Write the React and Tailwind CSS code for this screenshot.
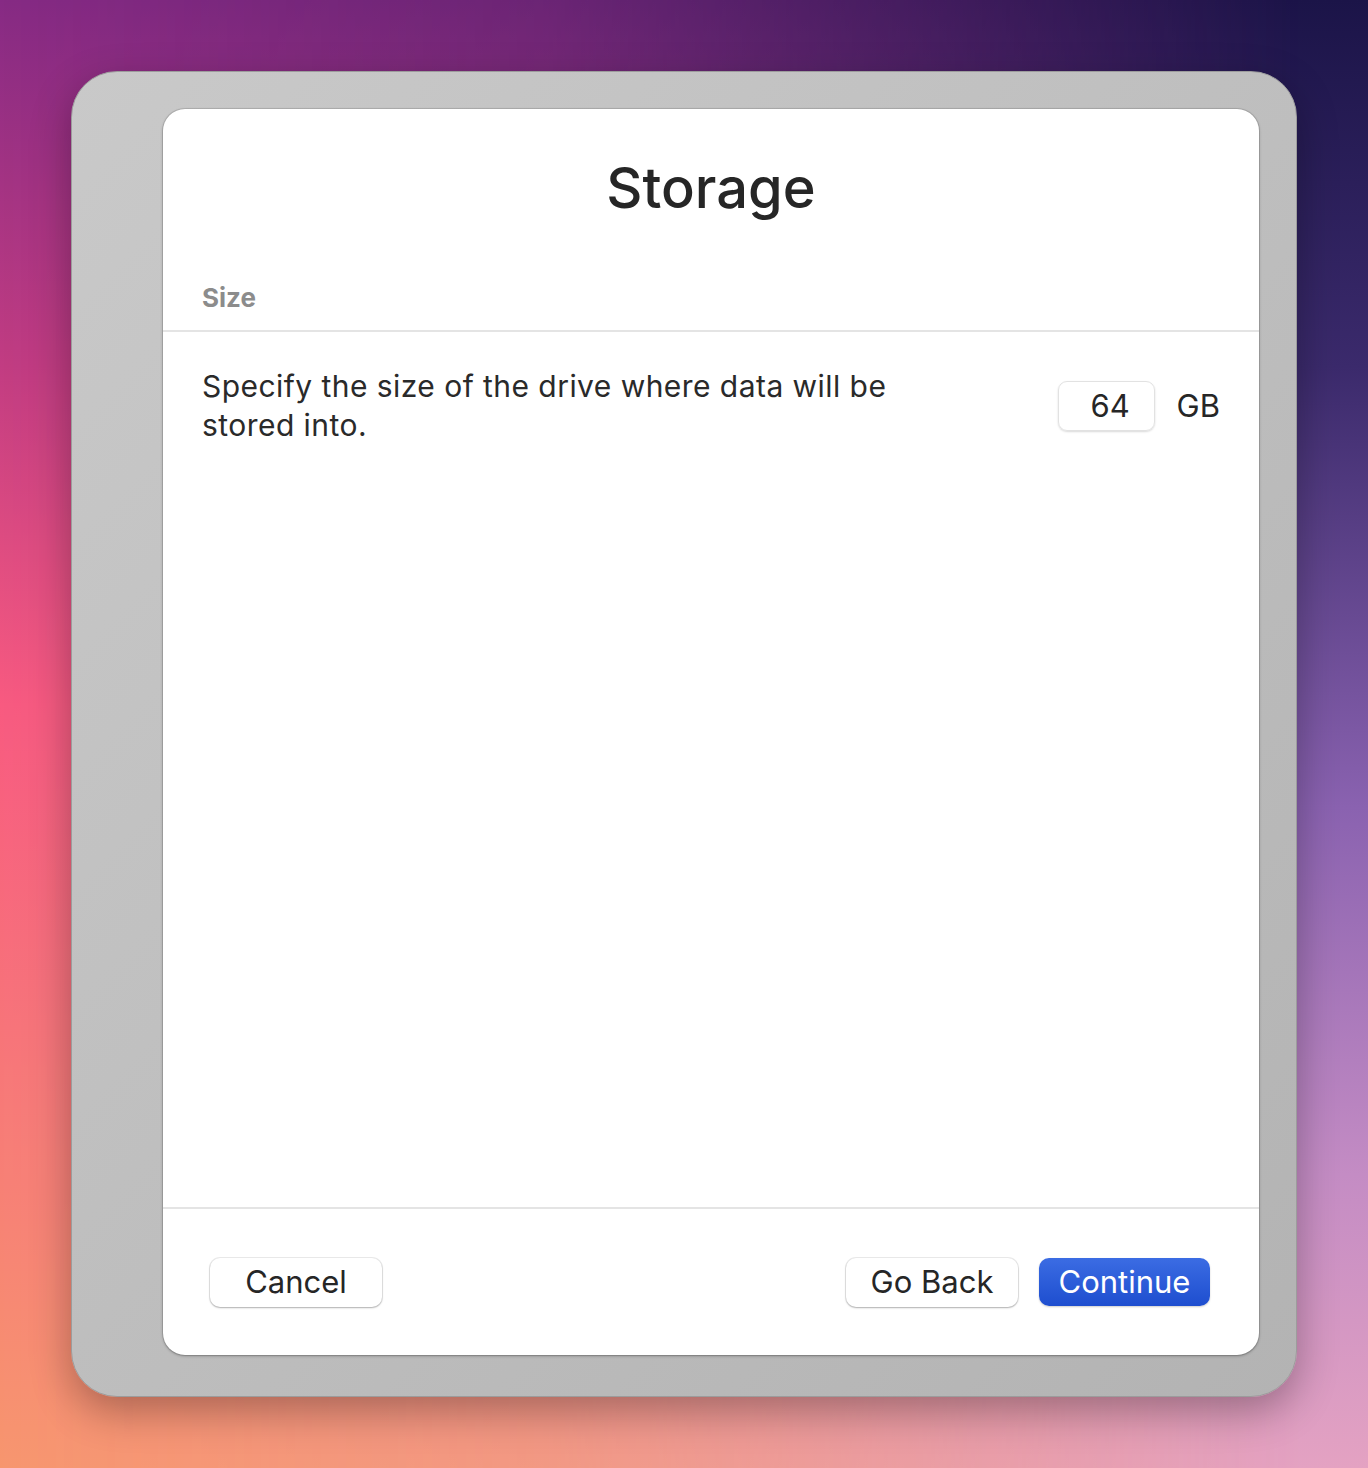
export default function App() {
  return (
    <div className="relative w-full h-[1468px] overflow-hidden bg-[linear-gradient(to_bottom,#1b1448_0%,#3b2a6c_25%,#8a62b0_55%,#c48cc4_80%,#e4a2c2_100%)] before:absolute before:inset-0 before:content-[''] before:bg-[linear-gradient(to_bottom,#862a84_0%,#c23c82_25%,#f85a80_48%,#f77479_70%,#f7966e_100%)] before:[mask-image:linear-gradient(to_right,black_0%,rgba(0,0,0,0.75)_40%,transparent_95%)] font-['Inter','Liberation_Sans',Arial,sans-serif]">
      <div className="relative pt-[71px] pl-[71px]">
        <div className="w-[1226px] h-[1326px] rounded-[46px] bg-[linear-gradient(135deg,#c9c9c9,#b3b3b3)] border border-[#9c9c9c] shadow-[0_14px_40px_rgba(0,0,0,0.3)] pl-[91px] pr-[37px] pt-[37px] pb-[41px]">
          <div className="h-full rounded-[22px] bg-white shadow-[0_0_0_1px_rgba(0,0,0,0.1),0_1px_3px_rgba(0,0,0,0.3)] flex flex-col">
            <div className="pt-[44px] text-center text-[56px] leading-[70px] font-medium text-[#262626]">
              Storage
            </div>
            <div className="mt-[60px] px-[39px] pb-[17px] border-b-2 border-[#e4e4e4] text-[26px] leading-[30px] font-bold text-[#8c8c8c]">
              Size
            </div>
            <div className="flex-1 px-[39px] pt-[35px]">
              <div className="flex items-center justify-between">
                <p className="w-[720px] text-[30px] tracking-[0.015em] leading-[39px] text-[#2a2a2a]">
                  Specify the size of the drive where data will be stored into.
                </p>
                <div className="flex items-center gap-[22px]">
                  <div className="w-[97px] h-[50px] rounded-[9px] border border-[#e2e2e2] shadow-[0_1px_2px_rgba(0,0,0,0.15)] flex items-center justify-center pl-[8px] text-[31px] text-[#262626]">
                    64
                  </div>
                  <span className="text-[31px] text-[#262626]">GB</span>
                </div>
              </div>
            </div>
            <div className="h-[148px] border-t-2 border-[#e4e4e4] flex items-center justify-between pl-[47px] pr-[49px]">
              <button className="w-[172px] h-[49px] rounded-[10px] bg-white shadow-[0_0_0_1px_rgba(0,0,0,0.08),0_1px_2px_rgba(0,0,0,0.25)] text-[31px] text-[#262626]">
                Cancel
              </button>
              <div className="flex items-center gap-[21px]">
                <button className="w-[172px] h-[49px] rounded-[10px] bg-white shadow-[0_0_0_1px_rgba(0,0,0,0.08),0_1px_2px_rgba(0,0,0,0.25)] text-[31px] text-[#262626]">
                  Go Back
                </button>
                <button className="w-[171px] h-[48px] rounded-[10px] bg-[linear-gradient(to_bottom,#3b6ce3,#1e4ecf)] shadow-[0_1px_2px_rgba(0,0,0,0.2)] text-[31px] text-white">
                  Continue
                </button>
              </div>
            </div>
          </div>
        </div>
      </div>
    </div>
  );
}
